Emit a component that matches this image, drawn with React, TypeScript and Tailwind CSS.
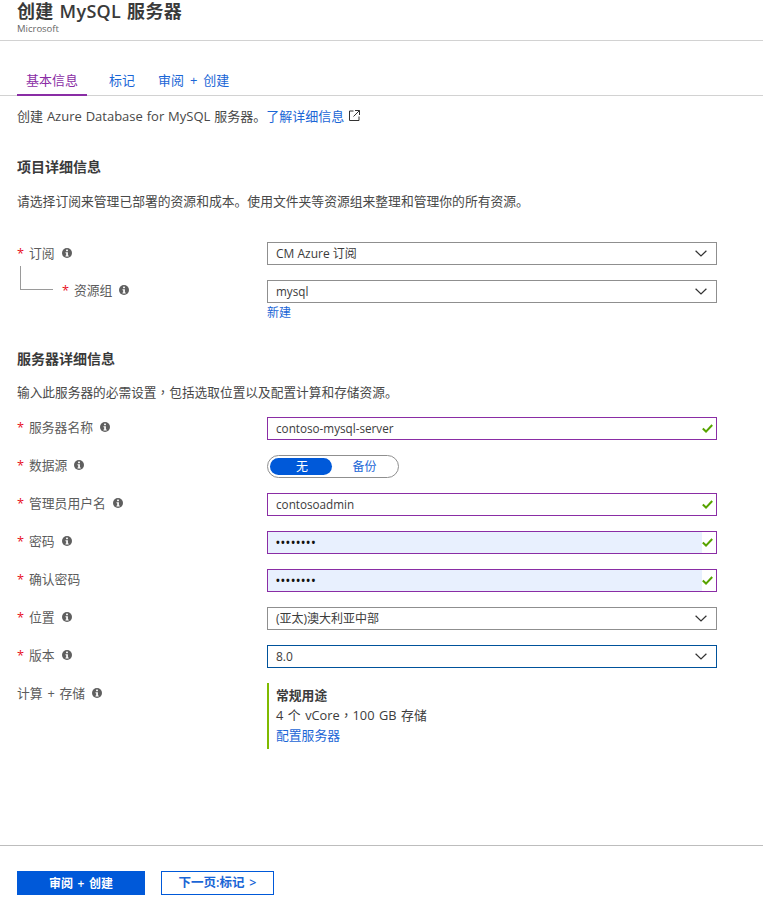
const font = "font-['Open_Sans','Noto_Sans_CJK_SC',sans-serif]";

const Info = () => (
  <svg viewBox="0 0 10 10" className="w-[10px] h-[10px] shrink-0">
    <circle cx="5" cy="5" r="5" fill="#5f5f5f" />
    <rect x="4.1" y="1.6" width="1.8" height="1.6" fill="#fff" />
    <path d="M3.5 4.2H5.9V7.5H6.7V8.5H3.5V7.5H4.2V5.2H3.5Z" fill="#fff" />
  </svg>
);

const Chevron = () => (
  <svg viewBox="0 0 12 7" className="w-[12px] h-[7px] shrink-0" fill="none" stroke="#333" strokeWidth="1.2">
    <path d="M0.6 0.8L6 6L11.4 0.8" />
  </svg>
);

const Check = () => (
  <svg viewBox="0 0 11 9" className="w-[11px] h-[9px]" fill="none" stroke="#57a300" strokeWidth="2">
    <path d="M0.8 4.6L4 7.6L10.2 1" />
  </svg>
);

const ExternalLink = () => (
  <svg viewBox="0 0 11 11" className="w-[11px] h-[11px]" fill="none" stroke="#333" strokeWidth="1">
    <path d="M4.5 1H.5V10.5H10V6.5M6 .5H10.5V5M10.5 .5L4.5 6.5" />
  </svg>
);

function Label({ text, required = true, info = true }: { text: string; required?: boolean; info?: boolean }) {
  return (
    <div className="flex items-center text-[12.8px] leading-[18px] text-[#5c5c5c] [word-spacing:1.5px]">
      {required && <span className="text-[#e81123] w-[11px] mr-[1px]">*</span>}
      <span>{text}</span>
      {info && (
        <span className="ml-[7px]">
          <Info />
        </span>
      )}
    </div>
  );
}

function Select({ value, border = 'border-[#8f8f8f]', size = 'text-[12px]' }: { value: string; border?: string; size?: string }) {
  return (
    <div className={`w-[450px] h-[23px] border ${border} flex items-center justify-between pl-[8px] pr-[9px] ${size} text-[#3c3c3c]`}>
      <span>{value}</span>
      <Chevron />
    </div>
  );
}

function ValidInput({ value, filled = false }: { value: string; filled?: boolean }) {
  return (
    <div className="w-[450px] h-[23px] border border-[#8a2da5] flex text-[11.7px] text-[#3c3c3c]">
      <div className={`flex-1 flex items-center pl-[8px] ${filled ? 'bg-[#e8f0fe]' : ''}`}>
        {filled ? <span className="text-[#111] tracking-[1.3px] text-[10px] font-bold">••••••••</span> : value}
      </div>
      <div className="w-[14px] flex items-center justify-start">
        <Check />
      </div>
    </div>
  );
}

function Row({ label, children }: { label: React.ReactNode; children: React.ReactNode }) {
  return (
    <div className="flex h-[23px] mb-[15px]">
      <div className="w-[250px] pt-[1px]">{label}</div>
      {children}
    </div>
  );
}

export default function App() {
  return (
    <div className={`${font} w-[763px] h-[915px] bg-white overflow-hidden`}>
      <header className="h-[41px] border-b border-[#d2d2d2] pl-[17px]">
        <h1 className="text-[18px] leading-[22px] font-semibold text-[#3a3a3a] tracking-[0.3px] [word-spacing:1px]">创建 MySQL 服务器</h1>
        <p className="text-[9.5px] leading-[12px] text-[#666] mt-[1px]">Microsoft</p>
      </header>

      <nav className="mt-[30px] h-[25px] border-b border-[#d2d2d2] pl-[17px] flex text-[13px] leading-[18px]">
        <div className="w-[70px] h-[25px] border-b-[2px] border-[#8a2da5] text-[#8a2da5] pl-[9px]">基本信息</div>
        <div className="ml-[22px] text-[#1a66d6]">标记</div>
        <div className="ml-[23px] text-[#1a66d6] [word-spacing:2.5px]">审阅 + 创建</div>
      </nav>

      <main className="pl-[17px]">
        <p className="mt-[10px] h-[20px] text-[13px] leading-[20px] text-[#484848] flex items-center [word-spacing:0.5px]">
          创建 Azure Database for MySQL 服务器。
          <span className="text-[#1a66d6]">了解详细信息</span>
          <span className="ml-[5px] mb-[2px]"><ExternalLink /></span>
        </p>

        <h2 className="mt-[31px] h-[20px] text-[14px] leading-[20px] font-semibold text-[#3a3a3a]">项目详细信息</h2>
        <p className="mt-[14px] h-[20px] text-[12.8px] leading-[20px] text-[#484848]">请选择订阅来管理已部署的资源和成本。使用文件夹等资源组来整理和管理你的所有资源。</p>

        <div className="mt-[31px] flex h-[23px]">
          <div className="w-[250px] pt-[2px]"><Label text="订阅" /></div>
          <Select value="CM Azure 订阅" />
        </div>
        <div className="mt-[15px] flex h-[23px] relative">
          <div className="absolute left-[3px] -top-[14px] w-[33px] h-[24px] border-l border-b border-[#9a9a9a]" />
          <div className="w-[250px] pl-[45px] pt-[1px]"><Label text="资源组" /></div>
          <Select value="mysql" size="text-[11.7px]" />
        </div>
        <div className="pl-[250px] h-[18px] mt-[1px] text-[12px] leading-[18px] text-[#1a66d6]">新建</div>

        <h2 className="mt-[27px] h-[20px] text-[14px] leading-[20px] font-semibold text-[#3a3a3a]">服务器详细信息</h2>
        <p className="mt-[14px] mb-[14px] h-[20px] text-[12.7px] leading-[18px] text-[#484848]">
          输入此服务器的必需设置<span className="font-['Noto_Sans_CJK_TC']">，</span>包括选取位置以及配置计算和存储资源。
        </p>

        <Row label={<Label text="服务器名称" />}><ValidInput value="contoso-mysql-server" /></Row>
        <Row label={<Label text="数据源" />}>
          <div className="w-[132px] h-[23px] rounded-full border border-[#8f8f8f] flex items-center pl-[2px] text-[12px]">
            <div className="w-[62px] h-[17px] rounded-full bg-[#0059d9] text-white text-center leading-[17px] pl-[2px]">无</div>
            <div className="w-[64px] text-center text-[#1a66d6] pl-[1px]">备份</div>
          </div>
        </Row>
        <Row label={<Label text="管理员用户名" />}><ValidInput value="contosoadmin" /></Row>
        <Row label={<Label text="密码" />}><ValidInput value="password" filled /></Row>
        <Row label={<Label text="确认密码" info={false} />}><ValidInput value="password" filled /></Row>
        <Row label={<Label text="位置" />}><Select value="(亚太)澳大利亚中部" /></Row>
        <Row label={<Label text="版本" />}><Select value="8.0" border="border-[#00529b]" /></Row>

        <div className="flex">
          <div className="w-[250px] pt-[1px]"><Label text="计算 + 存储" required={false} /></div>
          <div className="h-[66px] border-l-[2px] border-[#7fba00] pl-[7px] pt-[2px] text-[12.8px] leading-[20px] text-[#3c3c3c] [word-spacing:1.2px]">
            <div className="font-semibold">常规用途</div>
            <div>4 个 vCore<span className="font-['Noto_Sans_CJK_TC']">，</span>100 GB 存储</div>
            <div className="text-[#1a66d6]">配置服务器</div>
          </div>
        </div>
      </main>

      <footer className="mt-[96px] border-t border-[#bdbdbd] pl-[17px] pt-[25px] flex">
        <button className="w-[128px] h-[24px] bg-[#0059d9] text-white text-[12px] font-semibold [word-spacing:1.5px] pt-[1px]">审阅 + 创建</button>
        <button className="ml-[16px] w-[113px] h-[24px] border border-[#0059d9] text-[#1a66d6] text-[12.5px] font-semibold [word-spacing:1.5px] pt-[1px]">下一页:标记 &gt;</button>
      </footer>
    </div>
  );
}
